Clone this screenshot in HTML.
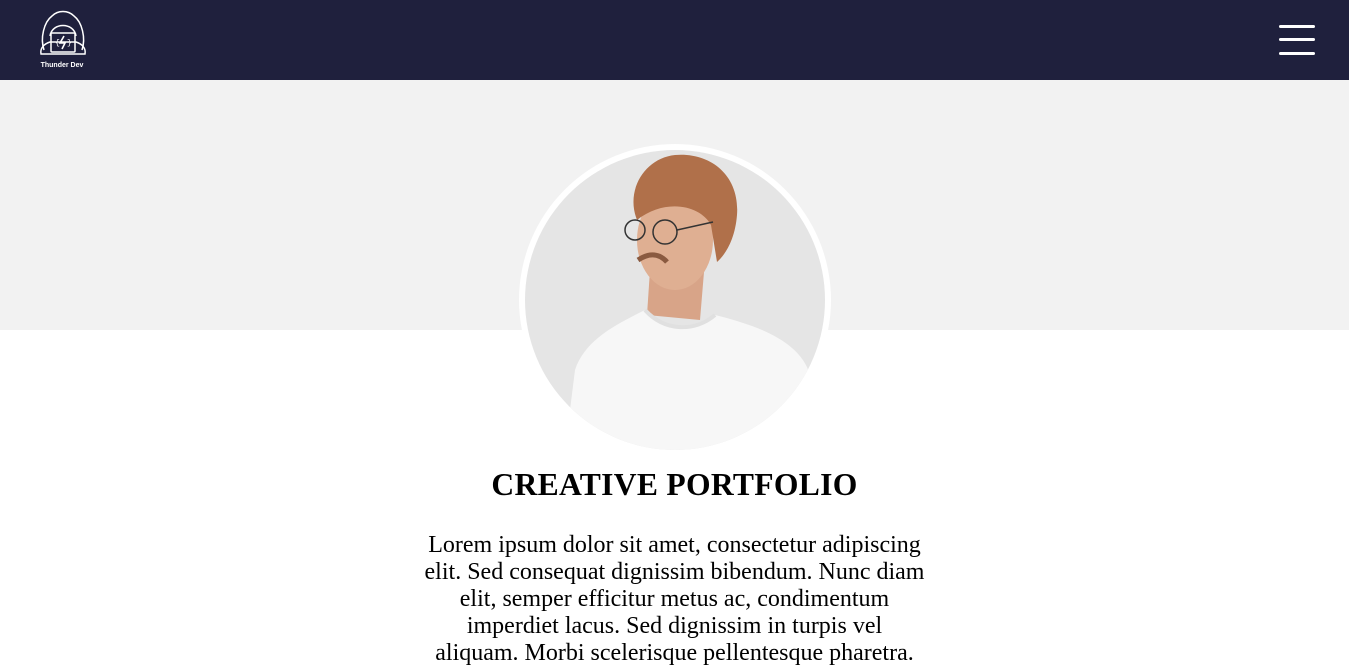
<!DOCTYPE html>
<html><head><meta charset="utf-8"><style>
*{margin:0;padding:0;box-sizing:border-box}
body{width:1349px;height:651px;overflow:hidden;background:#fff;font-family:"Liberation Serif",serif}
nav{height:80px;background:#1f203d;position:relative}
.logo{position:absolute;left:36px;top:8px}
.ham{position:absolute;left:1279px;width:36px;height:3px;background:#fff;border-radius:2px}
.band{position:absolute;top:80px;left:0;width:1349px;height:250px;background:#f2f2f2}
.av{position:absolute;left:519px;top:144px;width:312px;height:312px;border-radius:50%;background:#fff}
.av svg{position:absolute;left:6px;top:6px}
h1{position:absolute;top:467px;left:0;width:1349px;text-align:center;font-size:31.6px;font-weight:bold;letter-spacing:.3px;color:#000}
p{position:absolute;top:532px;left:424px;width:501px;text-align:center;font-size:24px;line-height:27px;color:#000}
</style></head><body>
<nav>
<svg class="logo" width="54" height="62" viewBox="0 0 54 62" fill="none" stroke="#fff" stroke-width="1.5">
<path d="M8 42 C4 30 8 14 16 8 C22 2 32 2 38 8 C46 14 50 30 46 42"/>
<path d="M14 28 C16 14 38 14 40 28"/>
<path d="M5 46 C4 40 8 36 14 34 L40 34 C46 36 50 40 49 46 Z"/>
<rect x="15" y="25" width="24" height="19" rx="1"/>
<path d="M28 28 L24 35 L29 35 L26 41" stroke-width="1.6"/>
<text x="19" y="37" fill="#fff" stroke="none" font-size="8" font-family="Liberation Mono">{</text>
<text x="31" y="37" fill="#fff" stroke="none" font-size="8" font-family="Liberation Mono">}</text>
<text x="26" y="59" fill="#fff" stroke="none" font-size="7" font-weight="bold" text-anchor="middle" font-family="Liberation Sans">Thunder Dev</text>
</svg>
<div class="ham" style="top:25px"></div>
<div class="ham" style="top:38px"></div>
<div class="ham" style="top:52px"></div>
</nav>
<div class="band"></div>
<div class="av">
<svg width="300" height="300" viewBox="0 0 300 300">
<defs><clipPath id="c"><circle cx="150" cy="150" r="150"/></clipPath></defs>
<g clip-path="url(#c)">
<rect width="300" height="300" fill="#e5e5e5"/>
<path d="M125 120 L122 165 L175 170 L180 110 Z" fill="#d8a488"/>
<path d="M40 300 L50 220 C60 190 90 175 120 160 C140 180 170 182 190 165 C230 175 275 190 285 225 L280 300 Z" fill="#f7f7f7"/>
<path d="M120 160 C140 182 170 182 190 165" stroke="#e0e0e0" stroke-width="4" fill="none"/>
<ellipse cx="150" cy="90" rx="38" ry="50" fill="#dfaf92"/>
<path d="M112 70 C100 40 120 8 150 5 C185 2 215 25 212 65 C210 90 200 105 192 112 L186 75 C175 55 140 48 112 70 Z" fill="#b0704a"/>
<path d="M113 110 C125 102 135 104 142 112" stroke="#8a5a40" stroke-width="5" fill="none"/>
<circle cx="110" cy="80" r="10" stroke="#333" stroke-width="1.5" fill="none"/>
<circle cx="140" cy="82" r="12" stroke="#333" stroke-width="1.5" fill="none"/>
<path d="M152 80 L188 72" stroke="#333" stroke-width="1.5"/>
</g></svg>
</div>
<h1>CREATIVE PORTFOLIO</h1>
<p>Lorem ipsum dolor sit amet, consectetur adipiscing elit. Sed consequat dignissim bibendum. Nunc diam elit, semper efficitur metus ac, condimentum imperdiet lacus. Sed dignissim in turpis vel aliquam. Morbi scelerisque pellentesque pharetra.</p>
</body></html>
